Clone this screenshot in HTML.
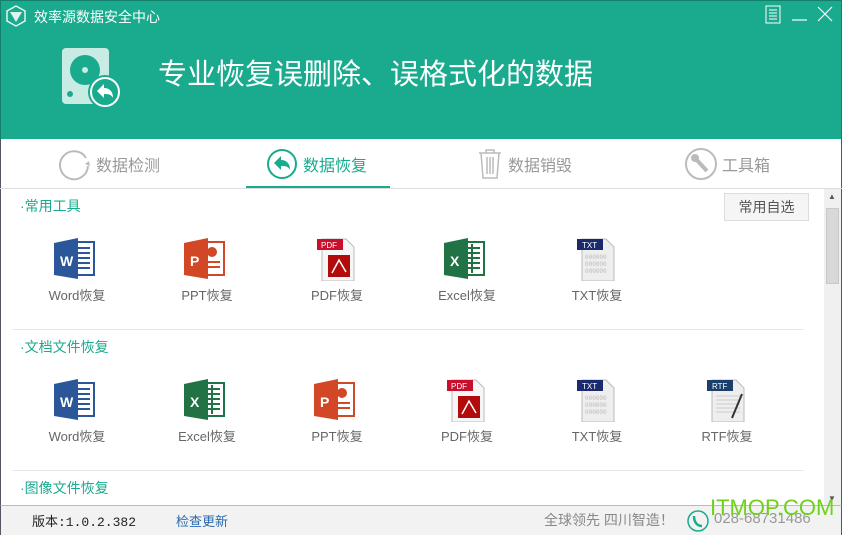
<!DOCTYPE html><html><head><meta charset="utf-8"><style>
*{margin:0;padding:0;box-sizing:border-box}
body{width:842px;height:535px;overflow:hidden;font-family:"Liberation Sans","Noto Sans CJK SC",sans-serif;background:#fff;position:relative}
.a{position:absolute}
.hdr{left:0;top:0;width:842px;height:139px;background:#1aab8e;border:1px solid #147f6a;border-bottom:none}
.tab{top:146px;height:36px;font-size:16px;color:#999;display:flex;align-items:center;gap:4px}
.sec{font-size:14px;color:#1aab8e;left:20px}
.lbl{font-size:13px;color:#666;width:100px;text-align:center}
.ic{width:46px;height:46px}
.sep{left:12px;width:792px;height:1px;background:#e8e8e8}
</style></head><body>
<div class="a hdr"></div>
<svg class="a" style="left:5px;top:5px" width="22" height="22" viewBox="0 0 22 22"><path d="M11 1 L20 6 V16 L11 21 L2 16 V6Z" fill="none" stroke="#e0f4ef" stroke-width="1.5"/><path d="M5 7 H17 L11 17Z" fill="#e0f4ef"/></svg>
<div class="a" style="left:34px;top:7px;color:#fff;font-size:14px">效率源数据安全中心</div>
<svg class="a" style="left:764px;top:5px" width="70" height="20"><rect x="2" y="1" width="14" height="17" fill="none" stroke="#fff"/><path d="M5 5H13M5 8H13M5 11H13M5 14H13" stroke="#fff"/><path d="M28 15H43" stroke="#fff" stroke-width="1.2"/><path d="M54 2L68 16M68 2L54 16" stroke="#fff" stroke-width="1.2"/></svg>
<svg class="a" style="left:62px;top:48px" width="62" height="60"><rect x="0" y="0" width="47" height="56" rx="4" fill="#c8ece4"/><circle cx="23" cy="22" r="15" fill="#1aab8e"/><circle cx="23" cy="22" r="3" fill="#c8ece4"/><circle cx="8" cy="46" r="3" fill="#1aab8e"/><circle cx="43" cy="44" r="17" fill="#1aab8e"/><circle cx="43" cy="44" r="14" fill="none" stroke="#fff" stroke-width="2"/><path d="M35 43 L42 36 V40 C48 40 51 44 51 50 C49 46 46 46 42 46 V50Z" fill="#fff"/></svg>
<div class="a" style="left:158px;top:51px;color:#fff;font-size:29px">专业恢复误删除、误格式化的数据</div>
<div class="a" style="left:0;top:139px;width:842px;height:50px;border-left:1px solid #556;border-right:1px solid #556"></div>
<div class="a tab" style="left:58px"><svg width="34" height="34"><path d="M28 11 A14 14 0 1 0 30 19" fill="none" stroke="#bbb" stroke-width="2"/><path d="M27 17l4 -3l1 5z" fill="#bbb"/></svg>数据检测</div>
<div class="a tab" style="left:265px;color:#1aab8e"><svg width="34" height="34"><circle cx="17" cy="17" r="14" fill="none" stroke="#1aab8e" stroke-width="2"/><path d="M9 16 L16 9 V13 C22 13 25 17 25 23 C23 19 20 19 16 19 V23Z" fill="#1aab8e"/></svg>数据恢复</div>
<div class="a" style="left:246px;top:186px;width:144px;height:2px;background:#1aab8e"></div>
<div class="a tab" style="left:476px"><svg width="28" height="34"><path d="M3 6H25M10 6V3H18V6M5 6L7 31H21L23 6M11 10V27M14 10V27M17 10V27" fill="none" stroke="#bbb" stroke-width="1.5"/></svg>数据销毁</div>
<div class="a tab" style="left:684px"><svg width="34" height="34"><circle cx="17" cy="17" r="15" fill="none" stroke="#bbb" stroke-width="2"/><path d="M10 10 L23 24" stroke="#bbb" stroke-width="4"/><circle cx="11" cy="11" r="4" fill="#bbb"/></svg>工具箱</div>
<div class="a" style="left:0;top:188px;width:842px;height:1px;background:#ddd"></div>
<div class="a" style="left:0;top:189px;width:1px;height:346px;background:#556"></div>
<div class="a" style="right:0;top:189px;width:1px;height:346px;background:#556"></div>
<div class="a" style="left:824px;top:189px;width:17px;height:316px;background:#f0f0f0"></div>
<div class="a" style="left:826px;top:208px;width:13px;height:76px;background:#d8d8d8;border:1px solid #c8c8c8"></div>
<div class="a" style="left:828px;top:192px;font-size:8px;color:#555">▲</div>
<div class="a" style="left:828px;top:494px;font-size:8px;color:#555">▼</div>
<div class="a sec" style="top:196px">·常用工具</div>
<div class="a" style="left:724px;top:193px;width:85px;height:28px;border:1px solid #ddd;background:#f5f5f5;font-size:14px;color:#555;text-align:center;line-height:26px">常用自选</div>
<div class="a sep" style="top:329px"></div>
<div class="a sec" style="top:337px">·文档文件恢复</div>
<div class="a sep" style="top:470px"></div>
<div class="a sec" style="top:478px">·图像文件恢复</div>
<svg width="0" height="0" style="position:absolute"><defs>
<g id="w"><rect x="16" y="7" width="26" height="33" fill="#fff" stroke="#2b579a" stroke-width="2"/><path d="M23 13H38M23 18H38M23 23H38M23 28H38M23 33H38" stroke="#2b579a" stroke-width="2"/><path d="M2 8 L26 3 V44 L2 40Z" fill="#2b579a"/><text x="8" y="31" font-size="14" font-weight="bold" fill="#fff" font-family="Liberation Sans">W</text></g>
<g id="p"><rect x="16" y="7" width="26" height="33" fill="#fff" stroke="#d24726" stroke-width="2"/><circle cx="30" cy="17" r="5" fill="#d24726"/><path d="M23 27H38M23 32H38" stroke="#d24726" stroke-width="2"/><path d="M2 8 L26 3 V44 L2 40Z" fill="#d24726"/><text x="8" y="31" font-size="14" font-weight="bold" fill="#fff" font-family="Liberation Sans">P</text></g>
<g id="x"><rect x="16" y="7" width="26" height="33" fill="#fff" stroke="#217346" stroke-width="2"/><path d="M23 13H38M23 18H38M23 23H38M23 28H38M23 33H38M30 9V38" stroke="#217346" stroke-width="2"/><path d="M2 8 L26 3 V44 L2 40Z" fill="#217346"/><text x="8" y="31" font-size="14" font-weight="bold" fill="#fff" font-family="Liberation Sans">X</text></g>
<g id="f"><path d="M10 4H34L42 12V46H10Z" fill="#f6f6f6" stroke="#bbb"/><rect x="5" y="4" width="26" height="11" fill="#c8102e"/><text x="9" y="13" font-size="8" fill="#fff" font-family="Liberation Sans">PDF</text><rect x="16" y="20" width="22" height="22" fill="#b30b0b"/><path d="M20 38 L27 25 L34 37" fill="none" stroke="#fff" stroke-width="1.5"/></g>
<g id="t"><path d="M10 4H34L42 12V46H10Z" fill="#eee" stroke="#bbb"/><rect x="5" y="4" width="26" height="11" fill="#1a2a6c"/><text x="10" y="13" font-size="8" fill="#fff" font-family="Liberation Sans">TXT</text><text x="13" y="24" font-size="6" fill="#bbb" font-family="Liberation Mono">000000</text><text x="13" y="31" font-size="6" fill="#bbb" font-family="Liberation Mono">000000</text><text x="13" y="38" font-size="6" fill="#bbb" font-family="Liberation Mono">000000</text></g>
<g id="r"><path d="M10 4H34L42 12V46H10Z" fill="#eee" stroke="#bbb"/><rect x="5" y="4" width="26" height="11" fill="#1a3f6c"/><text x="10" y="13" font-size="8" fill="#fff" font-family="Liberation Sans">RTF</text><path d="M14 20H38M14 24H38M14 28H38M14 32H38M14 36H38" stroke="#ccc"/><path d="M40 18 L30 42" stroke="#333" stroke-width="2"/></g>
</defs></svg>
<svg class="a ic" style="left:52px;top:235px"><use href="#w"/></svg><div class="a lbl" style="left:27px;top:285px">Word恢复</div>
<svg class="a ic" style="left:182px;top:235px"><use href="#p"/></svg><div class="a lbl" style="left:157px;top:285px">PPT恢复</div>
<svg class="a ic" style="left:312px;top:235px"><use href="#f"/></svg><div class="a lbl" style="left:287px;top:285px">PDF恢复</div>
<svg class="a ic" style="left:442px;top:235px"><use href="#x"/></svg><div class="a lbl" style="left:417px;top:285px">Excel恢复</div>
<svg class="a ic" style="left:572px;top:235px"><use href="#t"/></svg><div class="a lbl" style="left:547px;top:285px">TXT恢复</div>
<svg class="a ic" style="left:52px;top:376px"><use href="#w"/></svg><div class="a lbl" style="left:27px;top:426px">Word恢复</div>
<svg class="a ic" style="left:182px;top:376px"><use href="#x"/></svg><div class="a lbl" style="left:157px;top:426px">Excel恢复</div>
<svg class="a ic" style="left:312px;top:376px"><use href="#p"/></svg><div class="a lbl" style="left:287px;top:426px">PPT恢复</div>
<svg class="a ic" style="left:442px;top:376px"><use href="#f"/></svg><div class="a lbl" style="left:417px;top:426px">PDF恢复</div>
<svg class="a ic" style="left:572px;top:376px"><use href="#t"/></svg><div class="a lbl" style="left:547px;top:426px">TXT恢复</div>
<svg class="a ic" style="left:702px;top:376px"><use href="#r"/></svg><div class="a lbl" style="left:677px;top:426px">RTF恢复</div>
<div class="a" style="left:0;top:505px;width:842px;height:30px;background:#f2f2f2;border-top:1px solid #bbb;border-left:1px solid #556;border-right:1px solid #556"></div>
<div class="a" style="left:32px;top:511px;font-size:13px;color:#222;font-family:'Liberation Mono','Noto Sans CJK SC',monospace">版本:1.0.2.382</div>
<div class="a" style="left:176px;top:511px;font-size:13px;color:#2a6ab0">检查更新</div>
<div class="a" style="left:544px;top:510px;font-size:14px;color:#888">全球领先 四川智造！</div>
<svg class="a" style="left:686px;top:509px" width="24" height="24"><circle cx="12" cy="12" r="10" fill="none" stroke="#1aab8e" stroke-width="1.5"/><path d="M8 7 C8 13 11 17 16 17" stroke="#1aab8e" stroke-width="2.5" fill="none"/></svg>
<div class="a" style="left:714px;top:510px;font-size:15px;color:#999">028-68731486</div>
<div class="a" style="left:710px;top:495px;font-size:22px;color:#6fd11a">ITMOP.COM</div>
</body></html>
